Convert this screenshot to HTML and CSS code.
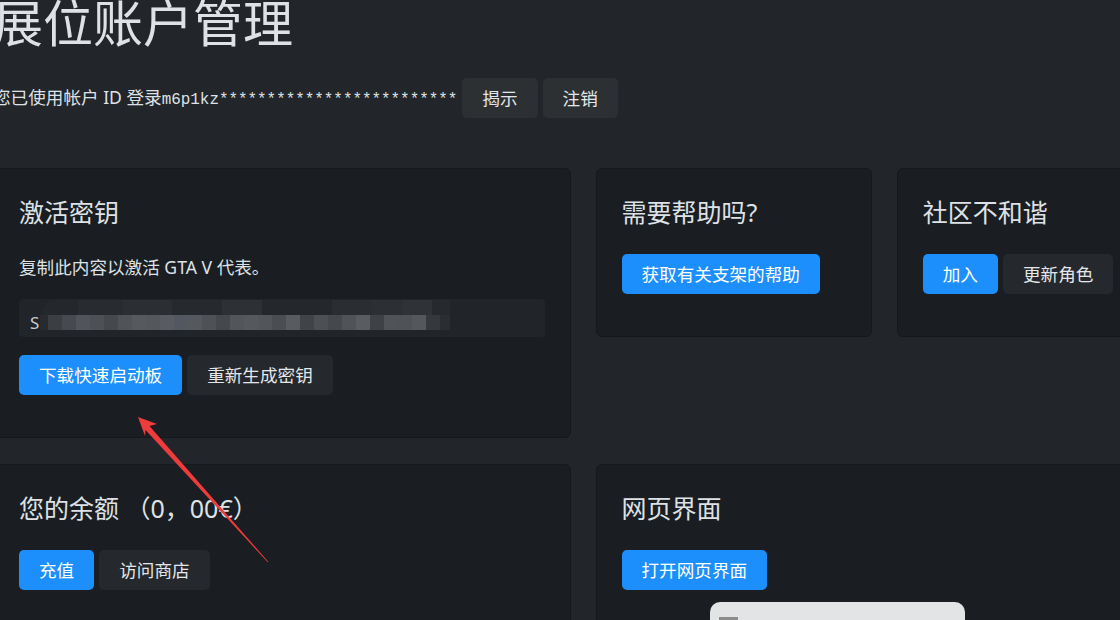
FILE: index.html
```html
<!DOCTYPE html>
<html lang="zh-CN">
<head>
<meta charset="utf-8">
<title>展位账户管理</title>
<link rel="stylesheet" href="styles.css">
</head>
<body>
<div class="page">
  <h1 class="page-title">展位账户管理</h1>
  <div class="account">
    <span class="account-text">您已使用帐户 ID 登录<code class="account-id">m6p1kz*************************</code></span>
    <div class="account-actions">
      <button class="btn btn-dark">揭示</button>
      <button class="btn btn-dark">注销</button>
    </div>
  </div>

  <div class="grid">
    <section class="card span-2">
      <h3 class="card-title">激活密钥</h3>
      <p class="card-text">复制此内容以激活 GTA V 代表。</p>
      <div class="key-field">
        <span class="key-char">S</span>
        <div class="key-blur">
          <div class="blur-top"></div>
          <div class="blur-bottom"></div>
        </div>
      </div>
      <div class="actions">
        <button class="btn btn-primary">下载快速启动板</button>
        <button class="btn btn-dark">重新生成密钥</button>
      </div>
    </section>

    <section class="card">
      <h3 class="card-title">需要帮助吗?</h3>
      <div class="actions">
        <button class="btn btn-primary">获取有关支架的帮助</button>
      </div>
    </section>

    <section class="card">
      <h3 class="card-title">社区不和谐</h3>
      <div class="actions">
        <button class="btn btn-primary">加入</button>
        <button class="btn btn-dark">更新角色</button>
      </div>
    </section>

    <section class="card span-2">
      <h3 class="card-title">您的余额 （0，00€）</h3>
      <div class="actions">
        <button class="btn btn-primary">充值</button>
        <button class="btn btn-dark">访问商店</button>
      </div>
    </section>

    <section class="card span-2">
      <h3 class="card-title">网页界面</h3>
      <div class="actions">
        <button class="btn btn-primary">打开网页界面</button>
      </div>
    </section>
  </div>
</div>

<svg class="annotation" width="1120" height="620" viewBox="0 0 1120 620" aria-hidden="true">
  <polygon points="138,417 157,424 149.5,426 268.5,562 267.5,562 145.5,430 145,436" fill="#ee3b3b"/>
</svg>

<div class="popup"><span class="popup-icon"></span></div>
</body>
</html>
```

FILE: styles.css
```css
html, body {
  margin: 0;
  padding: 0;
  overflow: hidden;
  background: #222529;
}

body {
  width: 1120px;
  height: 620px;
  position: relative;
  color: #dee2e6;
  font-family: "Noto Sans", "Noto Sans CJK SC", sans-serif;
  font-size: 17.6px;
}

.page {
  margin-left: -7px;
  width: 1180px;
}

.page-title {
  margin: -6px 0 0;
  font-size: 50px;
  line-height: 58px;
  font-weight: 400;
  color: #dee2e6;
}

.account {
  margin-top: 26px;
  display: flex;
  align-items: center;
  gap: 5px;
}

.account-text {
  line-height: 26px;
}

.account-id {
  font-family: "Liberation Mono", "DejaVu Sans Mono", monospace;
  font-size: 15.9px;
}

.account-actions {
  display: flex;
  gap: 5px;
}

.btn {
  font-family: "Noto Sans", "Noto Sans CJK SC", sans-serif;
  font-size: 17.6px;
  line-height: 26px;
  padding: 7px 20px;
  border: 0;
  border-radius: 5px;
  color: #f1f3f5;
  cursor: pointer;
}

.btn-dark {
  background: rgba(255, 255, 255, 0.05);
  color: #e4e7ea;
}

.btn-primary {
  background: #1c8ffc;
  color: #ffffff;
}

.grid {
  margin-top: 50px;
  display: grid;
  grid-template-columns: repeat(4, 1fr);
  column-gap: 25px;
  row-gap: 26px;
  align-items: start;
}

.span-2 {
  grid-column: span 2;
}

.card {
  background: #1a1d21;
  border: 1px solid #16181b;
  border-radius: 6px;
  padding: 24px 25px 42px;
}

.card-title {
  margin: 3px 0 26px;
  font-size: 25px;
  line-height: 32px;
  font-weight: 400;
  color: #dee2e6;
}

.card-text {
  margin: 0 0 19px;
  line-height: 26px;
}

.key-field {
  height: 38px;
  margin-bottom: 18px;
  border-radius: 4px;
  background: #212428;
  display: flex;
  align-items: flex-end;
  padding: 0 0 7px 11px;
  box-sizing: border-box;
  overflow: hidden;
}

.key-char {
  font-size: 17px;
  line-height: 16px;
  height: 15px;
  overflow: hidden;
  color: #c9ccd0;
  width: 10px;
}

.key-blur {
  width: 410px;
  display: flex;
  flex-direction: column;
}

.blur-top {
  height: 15px;
  margin-left: 2px;
  border-radius: 14px 0 0 0;
  background: linear-gradient(to right,
    #24272b 0 36px, #282b2f 36px 80px, #2b2e32 80px 130px, #26292d 130px 180px,
    #2d3034 180px 220px, #24272b 220px 290px, #2a2d31 290px 330px, #2c2f33 330px 360px,
    #2f3236 360px 390px, #26292d 390px 410px);
}

.blur-bottom {
  height: 15px;
  background: linear-gradient(to right,
    #30333770 0 8px, #3b3e42 8px 22px, #46494e 22px 36px, #51545a 36px 50px,
    #4d5055 50px 64px, #45484d 64px 78px, #505358 78px 92px, #56595e 92px 106px,
    #54575c 106px 120px, #585b60 120px 134px, #535760 134px 148px, #55585d 148px 162px,
    #4e5156 162px 176px, #45484c 176px 190px, #52555a 190px 204px, #55585d 204px 218px,
    #525559 218px 232px, #4a4d52 232px 246px, #585b60 246px 260px, #404347 260px 274px,
    #4c4f54 274px 288px, #45484d 288px 302px, #505358 302px 316px, #595c61 316px 330px,
    #3e4146 330px 344px, #505358 344px 358px, #4f5257 358px 372px, #54575c 372px 386px,
    #35383c 386px 400px, #2a2d31 400px 410px);
}

.actions {
  display: flex;
  gap: 5px;
}

.annotation {
  position: absolute;
  left: 0;
  top: 0;
  pointer-events: none;
}

.popup {
  position: absolute;
  left: 710px;
  top: 602px;
  width: 255px;
  height: 40px;
  background: #e3e4e5;
  border-radius: 10px;
}

.popup-icon {
  position: absolute;
  left: 9px;
  top: 15px;
  width: 19px;
  height: 10px;
  background: #8c8c8c;
}
```
